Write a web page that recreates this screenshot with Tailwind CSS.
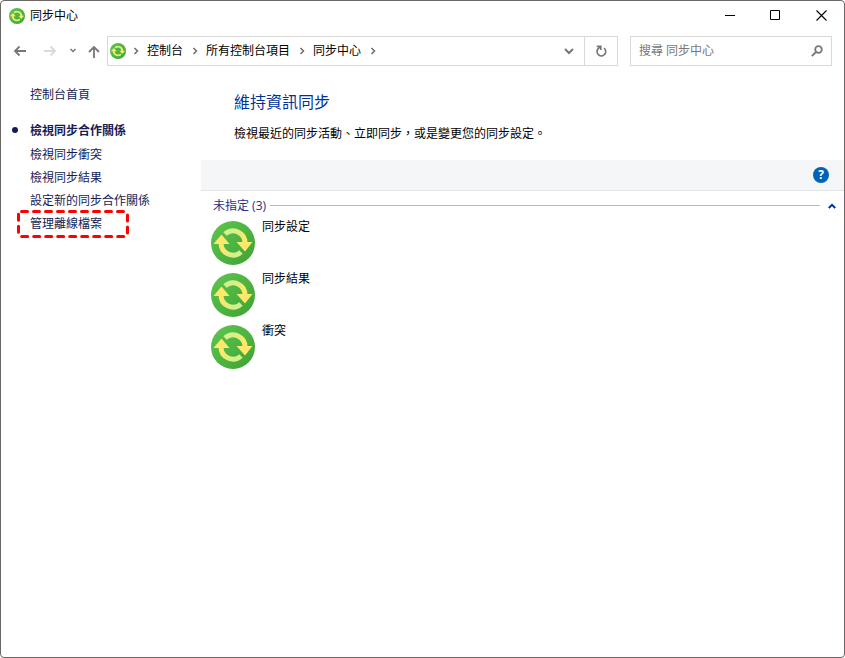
<!DOCTYPE html>
<html lang="zh-Hant">
<head>
    <meta charset="UTF-8">
    <meta name="viewport" content="width=device-width, initial-scale=1.0">
    <title>同步中心</title>
    <script src="https://cdn.jsdelivr.net/npm/@tailwindcss/browser@4"></script>
</head>
<body class="bg-white font-['Open_Sans','Noto_Sans_CJK_TC',sans-serif] text-xs text-black">
    <!-- shared sync icon -->
    <svg class="absolute size-0" aria-hidden="true">
        <defs>
            <linearGradient id="green" x1="0" y1="0" x2="1" y2="1">
                <stop offset="0" stop-color="#5fc650"/>
                <stop offset="1" stop-color="#3da233"/>
            </linearGradient>
            <linearGradient id="toRight" gradientUnits="userSpaceOnUse" x1="22" y1="9" x2="32" y2="18">
                <stop offset="0" stop-color="#d3f08a"/>
                <stop offset="1" stop-color="#fde86b"/>
            </linearGradient>
            <linearGradient id="toLeft" gradientUnits="userSpaceOnUse" x1="22" y1="35" x2="12" y2="26">
                <stop offset="0" stop-color="#d3f08a"/>
                <stop offset="1" stop-color="#fde86b"/>
            </linearGradient>
        </defs>
        <symbol id="sync" viewBox="0 0 44 44">
            <circle cx="22" cy="22" r="22" fill="url(#green)"/>
            <path d="M14 13A12 12 0 0 1 34 22" fill="none" stroke="url(#toRight)" stroke-width="5"/>
            <path d="M30 31A12 12 0 0 1 10 22" fill="none" stroke="url(#toLeft)" stroke-width="5"/>
            <path d="M25.500 21h16L34 30.500z" fill="#fde86b"/>
            <path d="M18.500 23h-16L10.500 13.500z" fill="#fde86b"/>
        </symbol>
    </svg>

    <div class="flex min-h-screen flex-col rounded border border-[#6b6767]">
        <header class="flex h-7 items-center justify-between">
            <div class="flex items-center gap-[5px] pt-px pl-2">
                <svg class="size-4"><use href="#sync"/></svg>
                <h1>同步中心</h1>
            </div>
            <div class="flex h-full">
                <button class="grid w-[45px] place-items-center" aria-label="最小化">
                    <svg class="size-[11px]" viewBox="0 0 11 11" stroke="#000"><path d="M0 5.500h10"/></svg>
                </button>
                <button class="grid w-[45px] place-items-center" aria-label="最大化">
                    <svg class="size-[11px]" viewBox="0 0 11 11" fill="none" stroke="#000"><path d="M.5.500h9v9h-9z"/></svg>
                </button>
                <button class="grid w-[46px] place-items-center" aria-label="關閉">
                    <svg class="size-[11px]" viewBox="0 0 11 11" stroke="#000" stroke-width="1.100"><path d="M.5.500l10 10M10.500.500l-10 10"/></svg>
                </button>
            </div>
        </header>

        <div class="flex h-11 items-center pr-3 pl-3">
            <nav class="flex shrink-0 items-center text-[#777]" aria-label="瀏覽">
                <button aria-label="上一頁">
                    <svg class="h-4 w-[14px]" viewBox="0 0 14 16" fill="none" stroke="currentColor" stroke-width="1.800"><path d="M13 8H2M6.500 3.500L2 8l4.500 4.500"/></svg>
                </button>
                <button class="ml-4 text-[#dadada]" aria-label="下一頁" disabled>
                    <svg class="h-4 w-[14px]" viewBox="0 0 14 16" fill="none" stroke="currentColor" stroke-width="1.800"><path d="M1 8h11M7.500 3.500L12 8l-4.500 4.500"/></svg>
                </button>
                <button class="ml-3" aria-label="最近的位置">
                    <svg class="h-4 w-2" viewBox="0 0 8 16" fill="none" stroke="currentColor" stroke-width="1.500"><path d="M1.500 6L4 8.500 6.500 6"/></svg>
                </button>
                <button class="ml-[11px] pt-px" aria-label="上一層">
                    <svg class="h-4 w-3" viewBox="0 0 12 16" fill="none" stroke="currentColor" stroke-width="1.800"><path d="M6 14V3M1 8l5-5 5 5"/></svg>
                </button>
            </nav>
            <div class="ml-[7px] flex h-[30px] flex-1 items-center border border-[#d9d9d9]">
                <svg class="ml-[2px] size-4 shrink-0"><use href="#sync"/></svg>
                <svg class="ml-[6px] h-2 w-2" viewBox="0 0 8 8" fill="none" stroke="#6d6d6d" stroke-width="1.500"><path d="M2.500 1L5.500 4 2.500 7"/></svg>
                <a href="#" class="ml-[7px]">控制台</a>
                <svg class="ml-2 h-2 w-2" viewBox="0 0 8 8" fill="none" stroke="#6d6d6d" stroke-width="1.500"><path d="M2.500 1L5.500 4 2.500 7"/></svg>
                <a href="#" class="ml-[7px]">所有控制台項目</a>
                <svg class="ml-2 h-2 w-2" viewBox="0 0 8 8" fill="none" stroke="#6d6d6d" stroke-width="1.500"><path d="M2.500 1L5.500 4 2.500 7"/></svg>
                <a href="#" class="ml-[7px]">同步中心</a>
                <svg class="ml-2 h-2 w-2" viewBox="0 0 8 8" fill="none" stroke="#6d6d6d" stroke-width="1.500"><path d="M2.500 1L5.500 4 2.500 7"/></svg>
                <button class="ml-auto grid h-full w-[30px] place-items-center" aria-label="先前的位置">
                    <svg class="h-2 w-[10px]" viewBox="0 0 10 8" fill="none" stroke="#777" stroke-width="2"><path d="M1 2l4 4 4-4"/></svg>
                </button>
                <button class="grid h-full w-[33px] place-items-center border-l border-[#d9d9d9]" aria-label="重新整理">
                    <svg class="size-3" viewBox="0 0 12 12" fill="none" stroke="#777" stroke-width="1.700"><path d="M9 3.200A4.300 4.300 0 1 1 2.600 4.500Q3.500 3 5 2M1.800 1.300H5.800V5"/></svg>
                </button>
            </div>
            <form class="ml-3 flex h-[30px] w-[202px] items-center border border-[#d9d9d9]" role="search">
                <input type="search" aria-label="搜尋" placeholder="搜尋 同步中心" class="min-w-0 flex-1 pl-2 outline-none placeholder:text-[#777]">
                <button class="mr-2 shrink-0" aria-label="開始搜尋">
                    <svg class="size-3" viewBox="0 0 12 12" fill="none" stroke="#777" stroke-width="1.800"><circle cx="7.500" cy="4.500" r="3.300"/><path d="M5 7L.8 11.200"/></svg>
                </button>
            </form>
        </div>

        <div class="flex flex-1">
            <aside class="w-[200px] shrink-0 pt-[10px] text-[#151c55]">
                <a href="#" class="ml-[29px] block h-6 leading-6">控制台首頁</a>
                <ul class="mt-3 leading-[23px]">
                    <li class="relative mb-px pl-[29px] font-bold"><span class="absolute top-2 left-[11px] size-[6px] rounded-full bg-current"></span>檢視同步合作關係</li>
                    <li class="pl-[29px]"><a href="#">檢視同步衝突</a></li>
                    <li class="pl-[29px]"><a href="#">檢視同步結果</a></li>
                    <li class="pl-[29px]"><a href="#">設定新的同步合作關係</a></li>
                    <li class="relative pl-[29px]">
                        <a href="#">管理離線檔案</a>
                        <svg class="pointer-events-none absolute -top-[2px] left-4 h-7 w-[113px]" viewBox="0 0 113 28" fill="none">
                            <rect x="1.500" y="1.500" width="109" height="25" rx="3" stroke="#f00" stroke-width="3" stroke-linecap="round" stroke-dasharray="6 6"/>
                        </svg>
                    </li>
                </ul>
            </aside>

            <main class="min-w-0 flex-1">
                <div class="h-[87px] pt-[17px] pl-[33px]">
                    <h2 class="text-base leading-6 text-[#003399]">維持資訊同步</h2>
                    <p class="mt-[10px] leading-5">檢視最近的同步活動、立即同步，或是變更您的同步設定。</p>
                </div>
                <div class="flex h-[31px] items-center justify-end border-b border-[#e2e5e8] bg-[#f4f6f8] pr-[15px]">
                    <button class="grid size-4 place-items-center rounded-full bg-[#0063b8] font-bold text-white" aria-label="說明">?</button>
                </div>
                <section>
                    <div class="flex h-[26px] items-center pt-[3px] pr-2 pl-3">
                        <h3 class="text-[#1e3287]">未指定 (3)</h3>
                        <div class="ml-1 h-px flex-1 bg-[#b0b8dc]"></div>
                        <button class="ml-2" aria-label="收合群組">
                            <svg class="h-2 w-2" viewBox="0 0 8 8" fill="none" stroke="#003399" stroke-width="2"><path d="M.8 6L4 2.800 7.200 6"/></svg>
                        </button>
                    </div>
                    <ul class="pl-[10px]">
                        <li class="h-[52px]"><a href="#" class="flex gap-[7px]"><svg class="mt-1 size-11"><use href="#sync"/></svg><span class="leading-5">同步設定</span></a></li>
                        <li class="h-[52px]"><a href="#" class="flex gap-[7px]"><svg class="mt-1 size-11"><use href="#sync"/></svg><span class="leading-5">同步結果</span></a></li>
                        <li class="h-[52px]"><a href="#" class="flex gap-[7px]"><svg class="mt-1 size-11"><use href="#sync"/></svg><span class="leading-5">衝突</span></a></li>
                    </ul>
                </section>
            </main>
        </div>
    </div>
</body>
</html>
